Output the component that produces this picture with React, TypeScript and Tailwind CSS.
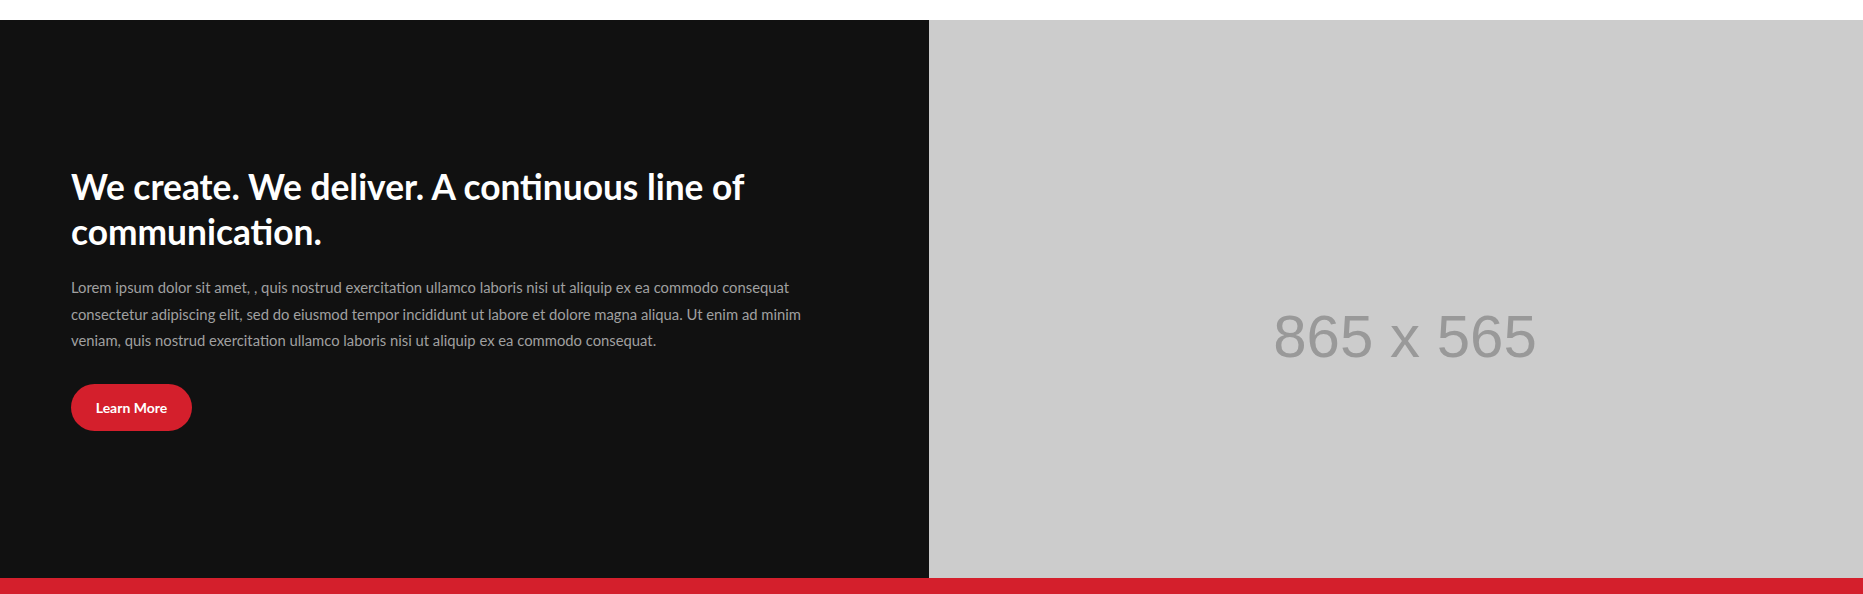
import React from 'react';

const App = () => {
  return (
    <div className="min-h-screen bg-white" style={{ fontFamily: "Lato, 'Noto Sans', sans-serif" }}>
      {/* Top spacer */}
      <div className="h-[20px] bg-white"></div>

      {/* Feature Section */}
      <section className="flex h-[558px]">
        {/* Left - Text */}
        <div className="w-[929px] shrink-0 bg-[#111111] flex items-center pl-[71px]">
          <div className="max-w-[760px] pb-[3px]">
            <h2 className="text-white text-[35.3px] leading-[45px] font-bold mb-[20px]">
              We create. We deliver. A continuous line of communication.
            </h2>
            <p className="text-[#a0a0a0] text-[14.8px] leading-[26.5px] mb-[30px]">
              Lorem ipsum dolor sit amet, , quis nostrud exercitation ullamco laboris nisi ut aliquip ex ea commodo consequat consectetur adipiscing elit, sed do eiusmod tempor incididunt ut labore et dolore magna aliqua. Ut enim ad minim veniam, quis nostrud exercitation ullamco laboris nisi ut aliquip ex ea commodo consequat.
            </p>
            <button className="w-[121px] h-[47px] rounded-full bg-[#d41f2c] text-white text-[14px] font-bold">
              Learn More
            </button>
          </div>
        </div>

        {/* Right - Image placeholder */}
        <div className="flex-1 bg-[#cccccc] flex items-center justify-center pt-[76px] pl-[18px]">
          <span className="text-[#999999] text-[60px]" style={{ fontFamily: "'Liberation Sans', Arial, sans-serif" }}>
            865 x 565
          </span>
        </div>
      </section>

      {/* Bottom bar */}
      <div className="h-[40px] bg-[#d41f2c]"></div>
    </div>
  );
};

export default App;
